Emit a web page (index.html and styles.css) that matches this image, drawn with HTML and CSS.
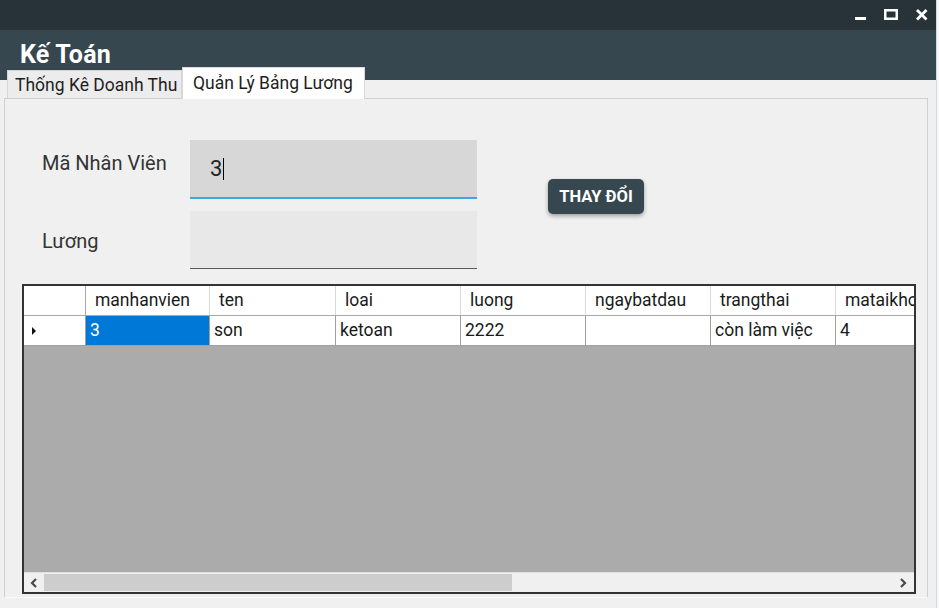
FILE: index.html
```html
<!DOCTYPE html>
<html lang="vi">
<head>
<meta charset="utf-8">
<title>Kế Toán</title>
<link rel="stylesheet" href="styles.css">
</head>
<body>
<div class="screen">
  <div class="window">
    <div class="titlebar">
      <svg class="controls" width="86" height="30" viewBox="0 0 86 30">
        <rect x="5" y="17" width="11" height="3" fill="#fff"/>
        <rect x="35.25" y="10.25" width="11.5" height="8.5" fill="none" stroke="#fff" stroke-width="2.5"/>
        <path d="M67 10 L76.5 19.5 M76.5 10 L67 19.5" stroke="#fff" stroke-width="2.8" fill="none"/>
      </svg>
    </div>
    <div class="chrome">
      <div class="title">Kế Toán</div>
      <div class="tabs">
        <div class="tab">Thống Kê Doanh Thu</div>
        <div class="tab active">Quản Lý Bảng Lương</div>
      </div>
    </div>
    <div class="tabpage">
      <div class="form">
        <div class="fields">
          <label class="lbl lbl1">Mã Nhân Viên</label>
          <div class="input focused"><span>3</span><span class="caret"></span></div>
          <label class="lbl lbl2">Lương</label>
          <div class="input"></div>
        </div>
        <button class="btn">THAY ĐỔI</button>
      </div>
      <div class="grid">
        <div class="gridbody">
          <div class="row head">
            <div class="cell rh"></div>
            <div class="cell c1">manhanvien</div>
            <div class="cell c2">ten</div>
            <div class="cell c3">loai</div>
            <div class="cell c3">luong</div>
            <div class="cell c3">ngaybatdau</div>
            <div class="cell c3">trangthai</div>
            <div class="cell c4">mataikhoan</div>
          </div>
          <div class="row data">
            <div class="cell rh"><span class="arrow"></span></div>
            <div class="cell c1 sel">3</div>
            <div class="cell c2">son</div>
            <div class="cell c3">ketoan</div>
            <div class="cell c3">2222</div>
            <div class="cell c3"></div>
            <div class="cell c3">còn làm việc</div>
            <div class="cell c4">4</div>
          </div>
        </div>
        <div class="hscroll">
          <div class="sbbtn">
            <svg width="8" height="10" viewBox="0 0 8 10"><path d="M6 1 L2 5 L6 9" fill="none" stroke="#4a4a4a" stroke-width="2.2"/></svg>
          </div>
          <div class="thumb"></div>
          <div class="track"></div>
          <div class="sbbtn">
            <svg width="8" height="10" viewBox="0 0 8 10"><path d="M2 1 L6 5 L2 9" fill="none" stroke="#4a4a4a" stroke-width="2.2"/></svg>
          </div>
        </div>
      </div>
    </div>
  </div>
  <div class="edge"></div>
</div>
</body>
</html>
```

FILE: styles.css
```css
html, body {
  margin: 0;
  padding: 0;
}
body {
  font-family: Roboto, "Noto Sans", "Liberation Sans", sans-serif;
  background: #f0f0f0;
  overflow: hidden;
}
.screen {
  display: flex;
  width: 939px;
  height: 608px;
}
.window {
  width: 936px;
  flex-shrink: 0;
  display: flex;
  flex-direction: column;
  background: #f0f0f0;
}
.edge {
  flex: 1;
  background: #f6f7f8;
  border-left: 1px solid #d6dadd;
}
.titlebar {
  height: 30px;
  background: #283339;
  display: flex;
  justify-content: flex-end;
}
.controls {
  display: block;
}
.chrome {
  height: 68px;
  background: linear-gradient(#37474f 0 50px, #f0f0f0 50px);
}
.title {
  height: 37px;
  box-sizing: border-box;
  padding: 12px 0 0 20px;
  color: #fff;
  font-size: 25px;
  font-weight: 700;
  line-height: 25px;
  letter-spacing: 0.2px;
}
.tabs {
  display: flex;
  align-items: flex-end;
  height: 31px;
  padding-left: 7px;
}
.tab {
  height: 28px;
  width: 175px;
  box-sizing: border-box;
  border: 1px solid #d6d6d6;
  border-bottom: none;
  background: #ececec;
  padding: 2px 0 0 7px;
  font-size: 17.5px;
  line-height: 25px;
  color: #1e1e1e;
  white-space: nowrap;
}
.tab.active {
  height: 32px;
  width: 183px;
  background: #fff;
  border-color: #dadada;
  padding: 3px 0 0 10px;
  line-height: 24px;
  margin-bottom: -1px;
  position: relative;
  z-index: 1;
}
.tabpage {
  margin-left: 4px;
  width: 924px;
  height: 500px;
  box-sizing: border-box;
  border: 1px solid #d0d0d0;
  border-bottom-color: #fbfbfb;
  padding: 41px 0 3px 0;
}
.form {
  display: flex;
  align-items: flex-start;
  padding-left: 37px;
}
.fields {
  display: grid;
  grid-template-columns: 148px 287px;
  row-gap: 12px;
}
.lbl {
  font-size: 20px;
  line-height: 24px;
  color: #333;
}
.lbl1 {
  padding-top: 11px;
}
.lbl2 {
  padding-top: 18px;
}
.input {
  height: 58px;
  box-sizing: border-box;
  background: #e8e8e8;
  border-bottom: 1px solid #5a5a5a;
}
.input.focused {
  height: 59px;
  background: #d7d7d7;
  border-bottom: 2px solid #3aa8e6;
  padding-left: 20px;
  font-size: 22px;
  color: #222;
  display: flex;
  align-items: center;
}
.caret {
  width: 1px;
  height: 22px;
  background: #000;
  margin-left: 1px;
}
.btn {
  margin: 39px 0 0 71px;
  width: 96px;
  height: 35px;
  border: none;
  border-radius: 5px;
  background: #37474f;
  color: #fff;
  font-family: Roboto, "Noto Sans", sans-serif;
  font-weight: 700;
  font-size: 16.5px;
  padding: 0;
  box-shadow: 0 2px 4px rgba(0, 0, 0, 0.35);
}
.grid {
  margin: 15px 0 0 17px;
  width: 894px;
  height: 310px;
  box-sizing: border-box;
  border: 2px solid #333;
  background: #ababab;
  display: flex;
  flex-direction: column;
  overflow: hidden;
}
.gridbody {
  flex: 1;
  overflow: hidden;
}
.row {
  display: flex;
  height: 30px;
  box-sizing: border-box;
  background: #fff;
  font-size: 17.5px;
  color: #1a1a1a;
}
.row.head {
  border-bottom: 1px solid #a8a8a8;
  line-height: 29px;
}
.row.data {
  border-bottom: 1px solid #a0a0a0;
  line-height: 29px;
}
.cell {
  flex-shrink: 0;
  box-sizing: border-box;
  white-space: nowrap;
  overflow: hidden;
  border-right: 1px solid #a0a0a0;
  padding-left: 4px;
}
.head .cell {
  border-right-color: #d8d8d8;
  padding-left: 9px;
}
.head .cell.rh {
  border-right-color: #a8a8a8;
}
.rh {
  width: 62px;
  display: flex;
  align-items: center;
  padding-left: 8px;
}
.c1 { width: 124px; }
.c2 { width: 126px; }
.c3 { width: 125px; }
.c4 { width: 140px; border-right: none; }
.sel {
  background: #0078d7;
  color: #fff;
}
.arrow {
  width: 0;
  height: 0;
  border-left: 4px solid #111;
  border-top: 4px solid transparent;
  border-bottom: 4px solid transparent;
}
.hscroll {
  height: 20px;
  box-sizing: border-box;
  border-top: 1px solid #e2e2e2;
  display: flex;
  background: #f0f0f0;
}
.sbbtn {
  width: 20px;
  display: flex;
  align-items: center;
  justify-content: center;
}
.sbbtn:last-child {
  width: 22px;
}
.thumb {
  width: 468px;
  background: #cdcdcd;
  margin: 1px 0;
}
.track {
  flex: 1;
}
```
